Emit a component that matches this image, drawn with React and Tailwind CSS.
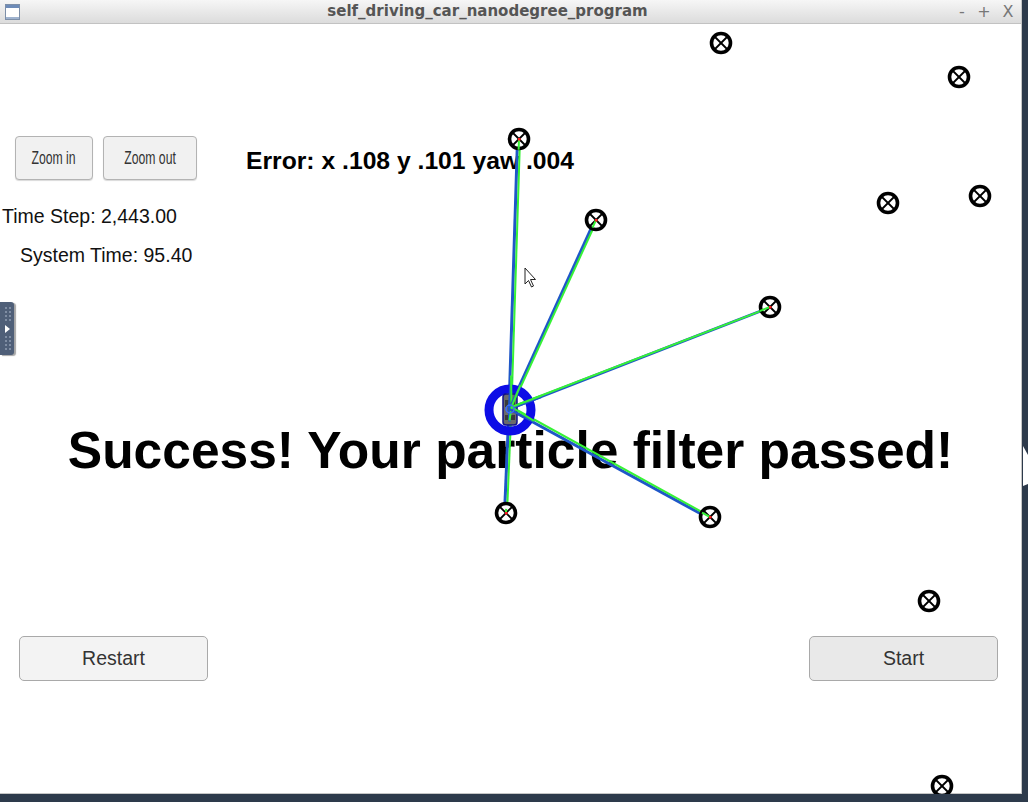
import React from "react";

const landmarks = [
  [721, 19], [959, 53], [519, 115], [596, 196], [888, 179], [980, 172],
  [770, 283], [506, 489], [710, 493], [929, 577], [942, 762],
];
const observed = [
  [519, 115], [596, 196], [770, 283], [506, 489], [710, 493],
];
const car = [510, 385];

function Scene() {
  return (
    <svg className="absolute left-0 top-0 pointer-events-none" width="1022" height="770" viewBox="0 0 1022 770">
      {observed.map(([x, y], i) => (
        <g key={"o" + i}>
          <line x1={car[0] - 1} y1={car[1]} x2={x - 1.5} y2={y + 1} stroke="#1f57c8" strokeWidth="3" />
          <line x1={car[0] + 1.5} y1={car[1] - 2} x2={x + 1} y2={y} stroke="#36f236" strokeWidth="2" />
        </g>
      ))}
      {landmarks.map(([x, y], i) => (
        <g key={"l" + i}>
          <circle cx={x} cy={y} r="9.5" fill="white" stroke="black" strokeWidth="3.6" />
          <line x1={x - 6} y1={y - 6} x2={x + 6} y2={y + 6} stroke="black" strokeWidth="1.8" />
          <line x1={x - 6} y1={y + 6} x2={x + 6} y2={y - 6} stroke="black" strokeWidth="1.8" />
        </g>
      ))}
      {observed.map(([x, y], i) => (
        <g key={"r" + i}>
          <line x1={car[0] + (x - car[0]) * 0.96} y1={car[1] + (y - car[1]) * 0.96} x2={x} y2={y} stroke="#36f236" strokeWidth="2" />
          <rect x={x - 1} y={y - 1} width="2.5" height="2.5" fill="#ff1a1a" />
        </g>
      ))}
      {/* car */}
      <circle cx={car[0]} cy={car[1] + 1} r="21" fill="none" stroke="#0d0de6" strokeWidth="9" />
      <rect x={car[0] - 7} y={car[1] - 15} width="14" height="31" rx="3" fill="#6a6a6a" stroke="#10108a" strokeWidth="1.5" />
      <rect x={car[0] - 5} y={car[1] - 9} width="10" height="7" fill="#3a3a3a" />
      <rect x={car[0] - 5} y={car[1] + 6} width="10" height="5" fill="#3a3a3a" />
      {observed.map(([x, y], i) => (
        <g key={"o2" + i}>
          <line x1={car[0] - 1} y1={car[1]} x2={car[0] + (x - car[0]) * 0.12} y2={car[1] + (y - car[1]) * 0.12} stroke="#1f57c8" strokeWidth="2.5" />
          <line x1={car[0] + 1.5} y1={car[1] - 2} x2={car[0] + (x - car[0]) * 0.12} y2={car[1] + (y - car[1]) * 0.12 - 1} stroke="#36f236" strokeWidth="2" />
        </g>
      ))}
      <circle cx={car[0]} cy={car[1]} r="4" fill="none" stroke="#3b6bff" strokeWidth="1.5" />
      {/* mouse cursor */}
      <path d="M525 244 L525 260 L528.5 256.5 L531.5 263 L533.5 262 L530.5 255.5 L535.5 255.5 Z" fill="white" stroke="#222" strokeWidth="1" strokeLinejoin="round" />
    </svg>
  );
}

export default function App() {
  const sans = { fontFamily: "'Liberation Sans', Arial, sans-serif" };
  return (
    <div className="w-[1028px] h-[802px] bg-[#2d3a4b] relative overflow-hidden">
      <div className="w-[1022px] h-[794px] flex flex-col bg-white border-b border-r border-[#c6c6c6]">
        {/* title bar */}
        <div className="h-[24px] shrink-0 flex items-center bg-gradient-to-b from-[#f6f6f6] to-[#dcdcdc] border-b border-[#c2c2c2]">
          <div className="w-[24px] flex justify-center">
            <div className="w-[15px] h-[16px] border border-[#7d8fa8] bg-white flex flex-col justify-between">
              <div className="h-[3px] bg-[#6d8bb8]" />
              <div className="h-[2px] bg-[#9fb3cf]" />
            </div>
          </div>
          <div className="flex-1 text-center text-[15px] font-bold text-[#555]" style={{ fontFamily: "'DejaVu Sans', sans-serif" }}>
            self_driving_car_nanodegree_program
          </div>
          <div className="w-[70px] flex text-[#777] text-[16px]" style={{ fontFamily: "'DejaVu Sans', sans-serif" }}>
            <span className="w-[22px] text-center">-</span>
            <span className="w-[22px] text-center">+</span>
            <span className="w-[26px] text-center">X</span>
          </div>
        </div>

        {/* content */}
        <div className="relative flex-1 flex flex-col text-[#111]" style={sans}>
          <div className="flex items-center mt-[112px] pl-[15px]">
            <button className="w-[78px] h-[44px] rounded-[4px] border border-[#b3b3b3] bg-[#f1f1f1] text-[#333] text-[18px] flex items-center justify-center shadow-[0_1px_1px_rgba(0,0,0,0.15)]">
              <span className="inline-block scale-x-[0.68]">Zoom in</span>
            </button>
            <button className="ml-[10px] w-[94px] h-[44px] rounded-[4px] border border-[#b3b3b3] bg-[#f1f1f1] text-[#333] text-[18px] flex items-center justify-center shadow-[0_1px_1px_rgba(0,0,0,0.15)]">
              <span className="inline-block scale-x-[0.68]">Zoom out</span>
            </button>
            <div className="ml-[49px] mt-[6px] text-[24.7px] font-bold leading-[30px] text-black">
              Error: x .108 y .101 yaw .004
            </div>
          </div>
          <div className="mt-[24px] pl-[2px] text-[19.5px] leading-[24px]">Time Step: 2,443.00</div>
          <div className="mt-[15px] pl-[20px] text-[19.5px] leading-[24px]">System Time: 95.40</div>
          <div className="mt-[153px] text-center text-[51.5px] font-bold leading-[60px] text-black">
            Success! Your particle filter passed!
          </div>
          <div className="mt-[156px] flex justify-between pl-[19px] pr-[23px]">
            <button className="w-[189px] h-[45px] rounded-[5px] border border-[#a9a9a9] bg-[#f3f3f3] text-[#333] text-[19.5px]">
              Restart
            </button>
            <button className="w-[189px] h-[45px] rounded-[5px] border border-[#a9a9a9] bg-[#e9e9e9] text-[#333] text-[19.5px]">
              Start
            </button>
          </div>

          <Scene />

          {/* side handle */}
          <div className="absolute left-0 top-[278px] w-[14px] h-[53px] rounded-r-[3px] bg-[#4f5f78] shadow-[2px_1px_1px_rgba(0,0,0,0.35)] flex flex-col items-center justify-between py-[5px]">
            <div className="grid grid-cols-2 gap-[2px] pl-[1px]">
              {Array.from({ length: 8 }).map((_, i) => (
                <div key={i} className="w-[2px] h-[2px] bg-[#7f8da3]" />
              ))}
            </div>
            <div className="w-0 h-0 border-y-[4px] border-y-transparent border-l-[5px] border-l-white" />
            <div className="grid grid-cols-2 gap-[2px] pl-[1px]">
              {Array.from({ length: 8 }).map((_, i) => (
                <div key={i} className="w-[2px] h-[2px] bg-[#7f8da3]" />
              ))}
            </div>
          </div>
        </div>
      </div>
      {/* cursor fragment on right edge */}
      <svg className="absolute left-[1022px] top-[446px]" width="6" height="42" viewBox="0 0 6 42">
        <polygon points="1,0 6,9 6,38 1,40" fill="white" />
      </svg>
    </div>
  );
}
